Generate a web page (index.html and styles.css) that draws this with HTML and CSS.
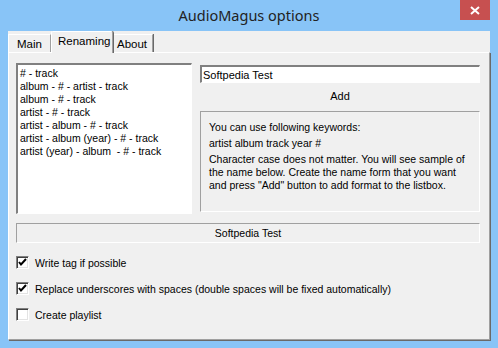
FILE: index.html
```html
<!DOCTYPE html>
<html lang="en">
<head>
  <meta charset="UTF-8" />
  <title>AudioMagus options</title>
  <link rel="stylesheet" href="styles.css">
</head>
<body>
  <div class="window">
    <div class="titlebar">
      <div class="title">AudioMagus options</div>
      <div class="close-btn">
        <svg width="10" height="9" viewBox="0 0 10 9"><path d="M1 1 L9 8 M9 1 L1 8" stroke="#fff" stroke-width="2"/></svg>
      </div>
    </div>

    <div class="client">
      <div class="tabs">
        <div class="tab">Main</div>
        <div class="tab active">Renaming</div>
        <div class="tab">About</div>
      </div>

      <div class="panel">
        <div class="top-row">
          <div class="listbox">
            <div>#&nbsp;-&nbsp;track</div>
            <div>album - # - artist - track</div>
            <div>album - # - track</div>
            <div>artist - # - track</div>
            <div>artist - album - # - track</div>
            <div>artist - album (year) - # - track</div>
            <div>artist (year) - album &nbsp;- # - track</div>
          </div>

          <div class="right-col">
            <div class="textbox">Softpedia Test</div>
            <div class="add-label">Add</div>
            <div class="info">
              <div class="info-line">You can use following keywords:</div>
              <div class="info-line">artist album track year #</div>
              <div class="info-para">Character case does not matter. You will see sample of the name below. Create the name form that you want and press "Add" button to add format to the listbox.</div>
            </div>
          </div>
        </div>

        <div class="sample">Softpedia Test</div>

        <div class="options">
          <div class="check-row">
            <span class="checkbox"><svg width="9" height="9" viewBox="0 0 9 9"><path d="M1 4 L3 6.5 L8 1" stroke="#000" stroke-width="2" fill="none"/></svg></span>
            Write tag if possible
          </div>
          <div class="check-row">
            <span class="checkbox"><svg width="9" height="9" viewBox="0 0 9 9"><path d="M1 4 L3 6.5 L8 1" stroke="#000" stroke-width="2" fill="none"/></svg></span>
            Replace underscores with spaces (double spaces will be fixed automatically)
          </div>
          <div class="check-row">
            <span class="checkbox"></span>
            Create playlist
          </div>
        </div>
      </div>
    </div>
  </div>
</body>
</html>
```

FILE: styles.css
```css
body {
  margin: 0;
  background: #88c4f7;
  font-family: 'Liberation Sans', Arial, sans-serif;
  font-size: 10.5px;
  color: #000;
}
.window {
  width: 498px;
  height: 348px;
  display: flex;
  flex-direction: column;
  background: #88c4f7;
}
.titlebar {
  height: 31px;
  position: relative;
  display: flex;
  justify-content: center;
  align-items: center;
}
.title {
  font-family: 'Noto Sans', sans-serif;
  font-size: 14.5px;
  color: #222;
  margin-top: -2px;
}
.close-btn {
  position: absolute;
  top: 0;
  right: 8px;
  width: 30px;
  height: 20px;
  background: #c75050;
  display: flex;
  align-items: center;
  justify-content: center;
}
.client {
  margin: 0 8px 8px 8px;
  flex: 1;
  background: #f0f0f0;
  display: flex;
  flex-direction: column;
}
.tabs {
  display: flex;
  height: 21px;
  align-items: flex-end;
}
.tab {
  height: 18px;
  line-height: 18px;
  padding: 0 5px;
  border-top: 1px solid #fff;
  border-left: 1px solid #fff;
  border-right: 1px solid #a0a0a0;
  box-shadow: 1px 0 0 #696969;
  font-size: 11.5px;
  box-sizing: border-box;
}
.tab:first-child {
  width: 43px;
  padding-left: 8px;
}
.tab.active {
  height: 22px;
  line-height: 19px;
  width: 62px;
  padding-left: 6px;
  margin-bottom: -1px;
  position: relative;
  z-index: 1;
  background: #f0f0f0;
  border-radius: 2px 2px 0 0;
}
.tab:last-child {
  width: 40px;
  padding-left: 3px;
}
.panel {
  flex: 1;
  border-top: 1px solid #fff;
  border-left: 1px solid #fff;
  border-right: 1px solid #a0a0a0;
  border-bottom: 1px solid #a0a0a0;
  box-shadow: 1px 1px 0 #696969;
  padding: 10px 7px 0 7px;
  display: flex;
  flex-direction: column;
}
.top-row {
  display: flex;
  gap: 8px;
}
.listbox {
  width: 176px;
  height: 151px;
  box-sizing: border-box;
  background: #fff;
  border-top: 2px solid #808080;
  border-left: 2px solid #808080;
  border-right: 1px solid #fff;
  border-bottom: 1px solid #fff;
  padding: 2px 0 0 2px;
  line-height: 13px;
}
.right-col {
  width: 280px;
  display: flex;
  flex-direction: column;
  padding-top: 2px;
}
.textbox {
  height: 18px;
  box-sizing: border-box;
  background: #fff;
  border-top: 2px solid #808080;
  border-left: 2px solid #808080;
  border-right: 1px solid #fff;
  border-bottom: 1px solid #fff;
  padding: 1px 0 0 1px;
  font-size: 11px;
  line-height: 14px;
}
.add-label {
  text-align: center;
  height: 28px;
  line-height: 26px;
  font-size: 11px;
}
.info {
  height: 101px;
  box-sizing: border-box;
  border-top: 1px solid #a0a0a0;
  border-left: 1px solid #a0a0a0;
  border-right: 1px solid #fff;
  border-bottom: 1px solid #fff;
  padding: 9px 6px 0 8px;
  line-height: 13px;
}
.info-line {
  margin-bottom: 3px;
}
.info-para {
  margin-top: 3px;
}
.sample {
  margin-top: 9px;
  width: 464px;
  height: 20px;
  box-sizing: border-box;
  border-top: 1px solid #a0a0a0;
  border-left: 1px solid #a0a0a0;
  border-right: 1px solid #fff;
  border-bottom: 1px solid #fff;
  text-align: center;
  line-height: 18px;
}
.options {
  display: flex;
  flex-direction: column;
  gap: 13px;
  margin-top: 13px;
}
.check-row {
  display: flex;
  align-items: center;
  gap: 6px;
  height: 13px;
  white-space: nowrap;
}
.checkbox {
  width: 13px;
  height: 13px;
  box-sizing: border-box;
  background: #fff;
  border-top: 1px solid #808080;
  border-left: 1px solid #808080;
  border-right: 1px solid #fff;
  border-bottom: 1px solid #fff;
  box-shadow: inset 1px 1px 0 #404040, inset -1px -1px 0 #e3e3e3;
  display: flex;
  align-items: center;
  justify-content: center;
}
```
